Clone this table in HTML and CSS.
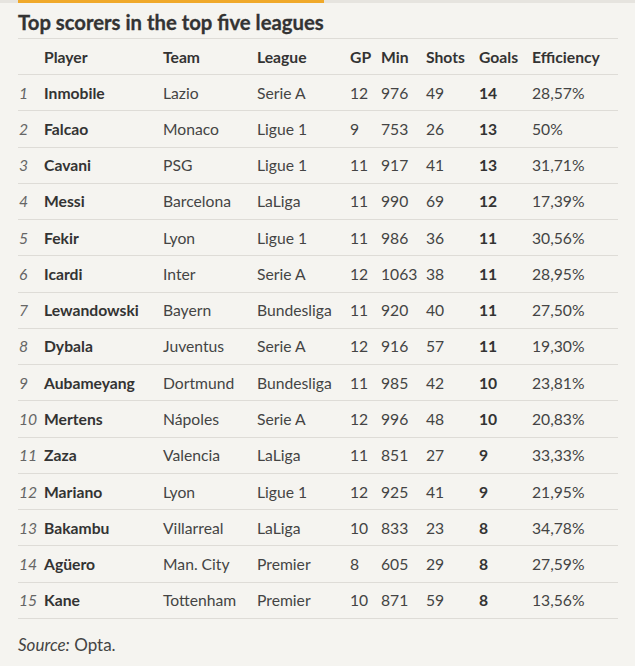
FILE: index.html
```html
<!DOCTYPE html>
<html>
<head>
<meta charset="utf-8">
<link rel="stylesheet" href="styles.css">
</head>
<body>
<div class="topbar"><div class="accent"></div></div>
<div class="wrap">
  <h1 class="title">Top scorers in the top five leagues</h1>
  <table class="scorers">
    <colgroup>
      <col class="c-rank"><col class="c-player"><col class="c-team"><col class="c-league"><col class="c-gp"><col class="c-min"><col class="c-shots"><col class="c-goals"><col class="c-eff">
    </colgroup>
    <thead>
      <tr><th></th><th>Player</th><th>Team</th><th>League</th><th>GP</th><th>Min</th><th>Shots</th><th>Goals</th><th>Efficiency</th></tr>
    </thead>
    <tbody>
      <tr><td class="rank">1</td><td class="name">Inmobile</td><td>Lazio</td><td>Serie A</td><td>12</td><td>976</td><td>49</td><td class="goals">14</td><td>28,57%</td></tr>
      <tr><td class="rank">2</td><td class="name">Falcao</td><td>Monaco</td><td>Ligue 1</td><td>9</td><td>753</td><td>26</td><td class="goals">13</td><td>50%</td></tr>
      <tr><td class="rank">3</td><td class="name">Cavani</td><td>PSG</td><td>Ligue 1</td><td>11</td><td>917</td><td>41</td><td class="goals">13</td><td>31,71%</td></tr>
      <tr><td class="rank">4</td><td class="name">Messi</td><td>Barcelona</td><td>LaLiga</td><td>11</td><td>990</td><td>69</td><td class="goals">12</td><td>17,39%</td></tr>
      <tr><td class="rank">5</td><td class="name">Fekir</td><td>Lyon</td><td>Ligue 1</td><td>11</td><td>986</td><td>36</td><td class="goals">11</td><td>30,56%</td></tr>
      <tr><td class="rank">6</td><td class="name">Icardi</td><td>Inter</td><td>Serie A</td><td>12</td><td>1063</td><td>38</td><td class="goals">11</td><td>28,95%</td></tr>
      <tr><td class="rank">7</td><td class="name">Lewandowski</td><td>Bayern</td><td>Bundesliga</td><td>11</td><td>920</td><td>40</td><td class="goals">11</td><td>27,50%</td></tr>
      <tr><td class="rank">8</td><td class="name">Dybala</td><td>Juventus</td><td>Serie A</td><td>12</td><td>916</td><td>57</td><td class="goals">11</td><td>19,30%</td></tr>
      <tr><td class="rank">9</td><td class="name">Aubameyang</td><td>Dortmund</td><td>Bundesliga</td><td>11</td><td>985</td><td>42</td><td class="goals">10</td><td>23,81%</td></tr>
      <tr><td class="rank">10</td><td class="name">Mertens</td><td>Nápoles</td><td>Serie A</td><td>12</td><td>996</td><td>48</td><td class="goals">10</td><td>20,83%</td></tr>
      <tr><td class="rank">11</td><td class="name">Zaza</td><td>Valencia</td><td>LaLiga</td><td>11</td><td>851</td><td>27</td><td class="goals">9</td><td>33,33%</td></tr>
      <tr><td class="rank">12</td><td class="name">Mariano</td><td>Lyon</td><td>Ligue 1</td><td>12</td><td>925</td><td>41</td><td class="goals">9</td><td>21,95%</td></tr>
      <tr><td class="rank">13</td><td class="name">Bakambu</td><td>Villarreal</td><td>LaLiga</td><td>10</td><td>833</td><td>23</td><td class="goals">8</td><td>34,78%</td></tr>
      <tr><td class="rank">14</td><td class="name">Agüero</td><td>Man. City</td><td>Premier</td><td>8</td><td>605</td><td>29</td><td class="goals">8</td><td>27,59%</td></tr>
      <tr><td class="rank">15</td><td class="name">Kane</td><td>Tottenham</td><td>Premier</td><td>10</td><td>871</td><td>59</td><td class="goals">8</td><td>13,56%</td></tr>
    </tbody>
  </table>
  <p class="source"><em>Source:</em> Opta.</p>
</div>
</body>
</html>
```
FILE: styles.css
```css
html, body {
  margin: 0;
  padding: 0;
  background: #f5f4f0;
}
body {
  font-family: Lato, "Open Sans", sans-serif;
  color: #444;
}
.topbar {
  height: 3px;
  background: #e6e4df;
  padding-left: 18px;
}
.accent {
  width: 306px;
  height: 3px;
  background: #f0a92a;
}
.wrap {
  padding-left: 18px;
  width: 600px;
}
.title {
  margin: 0;
  padding-top: 6px;
  height: 29px;
  font-size: 20.3px;
  line-height: 26px;
  font-weight: 700;
  color: #333;
  -webkit-text-stroke: 0.3px #333;
}
.scorers {
  width: 600px;
  border-collapse: collapse;
  table-layout: fixed;
  font-size: 15.7px;
}
.c-rank { width: 26px; }
.c-player { width: 119px; }
.c-team { width: 94px; }
.c-league { width: 93px; }
.c-gp { width: 31px; }
.c-min { width: 45px; }
.c-shots { width: 53px; }
.c-goals { width: 53px; }
.c-eff { width: 86px; }
.scorers th, .scorers td {
  padding: 0;
  text-align: left;
  white-space: nowrap;
  border-top: 1px solid #dedcd7;
  border-bottom: 1px solid #dedcd7;
}
.scorers th {
  height: 35px;
  font-weight: 700;
  color: #333;
}
.scorers td {
  height: 35.27px;
}
.scorers td.rank {
  font-style: italic;
  color: #666;
  padding-left: 1px;
}
.scorers td.name, .scorers td.goals {
  font-weight: 700;
  color: #333;
}
.source {
  margin: 0;
  padding-top: 15px;
  font-size: 17px;
  color: #444;
}
```
